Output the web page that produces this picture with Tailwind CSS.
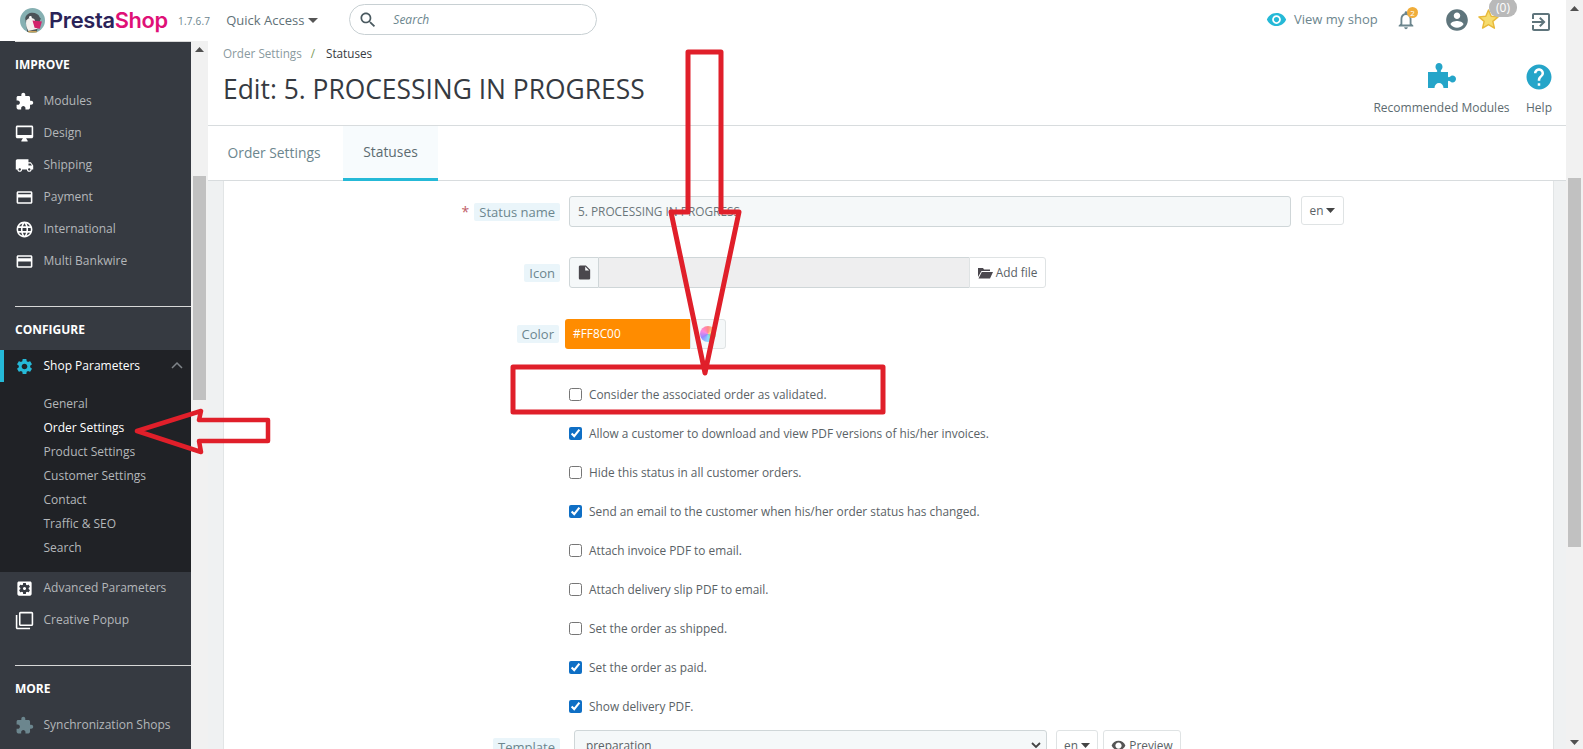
<!DOCTYPE html>
<html><head><meta charset="utf-8"><title>PrestaShop</title>
<script src="https://cdn.jsdelivr.net/npm/@tailwindcss/browser@4"></script></head>
<body class="m-0">
<div class="relative w-[1583px] h-[749px] overflow-hidden bg-white font-['Open_Sans',sans-serif] flex flex-col">
  <!-- top bar -->
  <header class="h-[41px] shrink-0 flex items-start bg-white relative">
    <div class="absolute left-[20px] top-[8px] w-[25px] h-[25px]">
      <svg viewBox="0 0 24 24" class="w-full h-full"><circle cx="12" cy="12" r="12" fill="#86b0b2"/><path d="M5 10C6 3 17 3 19 9L20 10L18 15L16 23H7Z" fill="#4b5257"/><path d="M6 12C8 9 12 9 14 11L17 20L8 22Q5 17 6 12Z" fill="#f4f1ee"/><path d="M12 12l9 1-2 7-5-1z" fill="#d2236a"/><circle cx="10" cy="9" r="1.300" fill="#fff"/><path d="M8 22h8v1.500H8z" fill="#c9a25a"/></svg>
    </div>
    <div class="ml-[49px] mt-[4px] w-[120px] text-[21.800px] leading-[32px] font-['Inter',sans-serif] font-semibold text-[#2a2358] tracking-[-0.3px] whitespace-nowrap">Presta<span class="text-[#df1077]">Shop</span></div>
    <div class="ml-[9px] mt-[13px] text-[10px] leading-[16px] text-[#6c868e] tracking-[0.2px]">1.7.6.7</div>
    <div class="ml-[16px] mt-[11px] flex items-center text-[13px] leading-[18px] text-[#5f7177]">Quick Access<svg class="ml-[4px] w-[10px] h-[5px]" viewBox="0 0 10 5"><path d="M0 0h10L5 5z" fill="#555"/></svg></div>
    <div class="ml-[31px] mt-[4px] w-[248px] h-[31px] rounded-full border border-[#c8d0d3] flex items-center">
      <svg class="ml-[8px] w-[20px] h-[20px]" viewBox="0 0 24 24"><path fill="#4a5a60" d="M15.5 14h-.79l-.28-.27C15.41 12.59 16 11.11 16 9.5 16 5.91 13.09 3 9.5 3S3 5.91 3 9.5 5.91 16 9.5 16c1.61 0 3.09-.59 4.23-1.57l.27.28v.79l5 4.99L20.49 19l-4.99-5zm-6 0C7.01 14 5 11.99 5 9.5S7.01 5 9.5 5 14 7.01 14 9.5 11.99 14 9.5 14z"/></svg>
      <span class="ml-[15px] text-[12px] italic text-[#6c868e]">Search</span>
    </div>
    <div class="absolute left-[1266px] top-[8px] flex items-center text-[13px] leading-[22px] text-[#6c868e]">
      <svg class="w-[21px] h-[21px] mr-[7px]" viewBox="0 0 24 24"><path fill="#25b9d7" d="M12 4.5C7 4.5 2.73 7.61 1 12c1.73 4.39 6 7.5 11 7.5s9.27-3.11 11-7.5c-1.73-4.39-6-7.5-11-7.5zM12 17c-2.76 0-5-2.24-5-5s2.24-5 5-5 5 2.24 5 5-2.24 5-5 5zm0-8c-1.66 0-3 1.34-3 3s1.34 3 3 3 3-1.34 3-3-1.34-3-3-3z"/></svg>View my shop
    </div>
    <div class="absolute left-[1395px] top-[9px] w-[22px] h-[22px]">
      <svg class="w-full h-full" viewBox="0 0 24 24"><path fill="#6c868e" d="M12 22c1.1 0 2-.9 2-2h-4c0 1.1.9 2 2 2zm6-6v-5c0-3.07-1.63-5.64-4.5-6.32V4c0-.83-.67-1.5-1.5-1.5s-1.5.67-1.5 1.5v.68C7.64 5.36 6 7.92 6 11v5l-2 2v1h16v-1l-2-2zm-2 1H8v-6c0-2.48 1.51-4.5 4-4.5s4 2.02 4 4.5v6z"/></svg>
      <span class="absolute left-[12px] top-[-2px] w-[11px] h-[11px] rounded-full bg-[#f0ad3a] text-white text-[8px] leading-[11px] text-center">2</span>
    </div>
    <svg class="absolute left-[1444px] top-[7px] w-[26px] h-[26px]" viewBox="0 0 24 24"><path fill="#5f757c" d="M12 2C6.48 2 2 6.48 2 12s4.48 10 10 10 10-4.48 10-10S17.52 2 12 2zm0 3c1.66 0 3 1.34 3 3s-1.34 3-3 3-3-1.34-3-3 1.34-3 3-3zm0 14.2c-2.5 0-4.71-1.28-6-3.22.03-1.99 4-3.08 6-3.08 1.99 0 5.97 1.09 6 3.08-1.29 1.94-3.5 3.22-6 3.22z"/></svg>
    <svg class="absolute left-[1477px] top-[8px] w-[23px] h-[23px]" viewBox="0 0 24 24"><path fill="#f6dc6e" stroke="#e8b93a" stroke-width="1.500" stroke-linejoin="round" d="M12 17.27L18.18 21l-1.64-7.03L22 9.24l-7.19-.61L12 2 9.19 8.63 2 9.24l5.46 4.73L5.82 21z"/></svg>
    <div class="absolute left-[1489px] top-[-2px] w-[28px] h-[19px] rounded-[9px] bg-[#b9b9b9] text-white text-[12px] leading-[19px] text-center">(0)</div>
    <svg class="absolute left-[1529px] top-[10px] w-[24px] h-[24px]" viewBox="0 0 24 24"><path fill="#5f757c" d="M10.09 15.59L11.5 17l5-5-5-5-1.41 1.41L12.67 11H3v2h9.67l-2.58 2.59zM19 3H5c-1.11 0-2 .9-2 2v4h2V5h14v14H5v-4H3v4c0 1.1.89 2 2 2h14c1.1 0 2-.9 2-2V5c0-1.1-.9-2-2-2z"/></svg>
  </header>

  <div class="flex flex-1 min-h-0">
    <!-- sidebar -->
    <aside class="w-[191px] shrink-0 bg-[#363a41] text-[12px] text-[#b4b7ba] relative">
      <div class="ml-[15px] h-px bg-[#d8d8d8]"></div>
      <div class="pl-[15px] pt-[14px] h-[43px] text-[12px] leading-[18px] font-bold text-white">IMPROVE</div>
      <nav>
        <a class="flex items-center h-[32px] pl-[15px]"><svg class="w-[19px] h-[19px] mr-[9.500px]" viewBox="0 0 24 24"><path fill="#fff" d="M20.5 11H19V7c0-1.1-.9-2-2-2h-4V3.5C13 2.12 11.88 1 10.5 1S8 2.12 8 3.5V5H4c-1.1 0-1.99.9-1.99 2v3.8H3.5c1.49 0 2.7 1.21 2.7 2.7s-1.21 2.7-2.7 2.7H2V20c0 1.1.9 2 2 2h3.8v-1.5c0-1.49 1.21-2.7 2.7-2.7 1.49 0 2.7 1.21 2.7 2.7V22H17c1.1 0 2-.9 2-2v-4h1.5c1.38 0 2.5-1.12 2.5-2.5S21.88 11 20.5 11z"/></svg>Modules</a>
        <a class="flex items-center h-[32px] pl-[15px]"><svg class="w-[19px] h-[19px] mr-[9.500px]" viewBox="0 0 24 24"><path fill="#fff" d="M21 2H3c-1.1 0-2 .9-2 2v12c0 1.1.9 2 2 2h7l-2 3v1h8v-1l-2-3h7c1.1 0 2-.9 2-2V4c0-1.1-.9-2-2-2zm0 12H3V4h18v10z"/></svg>Design</a>
        <a class="flex items-center h-[32px] pl-[15px]"><svg class="w-[19px] h-[19px] mr-[9.500px]" viewBox="0 0 24 24"><path fill="#fff" d="M20 8h-3V4H3c-1.1 0-2 .9-2 2v11h2c0 1.66 1.34 3 3 3s3-1.34 3-3h6c0 1.66 1.34 3 3 3s3-1.34 3-3h2v-5l-3-4zM6 18.5c-.83 0-1.5-.67-1.5-1.5s.67-1.5 1.5-1.5 1.5.67 1.5 1.5-.67 1.5-1.5 1.5zm13.5-9l1.96 2.5H17V9.5h2.5zm-1.5 9c-.83 0-1.5-.67-1.5-1.5s.67-1.5 1.5-1.5 1.5.67 1.5 1.5-.67 1.5-1.5 1.5z"/></svg>Shipping</a>
        <a class="flex items-center h-[32px] pl-[15px]"><svg class="w-[19px] h-[19px] mr-[9.500px]" viewBox="0 0 24 24"><path fill="#fff" d="M20 4H4c-1.11 0-1.99.89-1.99 2L2 18c0 1.11.89 2 2 2h16c1.11 0 2-.89 2-2V6c0-1.11-.89-2-2-2zm0 14H4v-6h16v6zm0-10H4V6h16v2z"/></svg>Payment</a>
        <a class="flex items-center h-[32px] pl-[15px]"><svg class="w-[19px] h-[19px] mr-[9.500px]" viewBox="0 0 24 24"><path fill="#fff" d="M11.99 2C6.47 2 2 6.48 2 12s4.47 10 9.99 10C17.52 22 22 17.52 22 12S17.52 2 11.99 2zm6.93 6h-2.95c-.32-1.25-.78-2.45-1.38-3.56 1.84.63 3.37 1.91 4.33 3.56zM12 4.04c.83 1.2 1.48 2.53 1.91 3.96h-3.82c.43-1.43 1.08-2.76 1.91-3.96zM4.26 14C4.1 13.36 4 12.69 4 12s.1-1.36.26-2h3.38c-.08.66-.14 1.32-.14 2 0 .68.06 1.34.14 2H4.26zm.82 2h2.95c.32 1.25.78 2.45 1.38 3.56-1.84-.63-3.37-1.9-4.33-3.56zm2.95-8H5.08c.96-1.66 2.49-2.93 4.33-3.56C8.81 5.55 8.35 6.75 8.03 8zM12 19.96c-.83-1.2-1.48-2.53-1.91-3.96h3.82c-.43 1.43-1.08 2.76-1.91 3.96zM14.34 14H9.66c-.09-.66-.16-1.32-.16-2 0-.68.07-1.35.16-2h4.68c.09.65.16 1.32.16 2 0 .68-.07 1.34-.16 2zm.25 5.56c.6-1.11 1.06-2.31 1.38-3.56h2.95c-.96 1.65-2.49 2.93-4.33 3.56zM16.36 14c.08-.66.14-1.32.14-2 0-.68-.06-1.34-.14-2h3.38c.16.64.26 1.31.26 2s-.1 1.36-.26 2h-3.38z"/></svg>International</a>
        <a class="flex items-center h-[32px] pl-[15px]"><svg class="w-[19px] h-[19px] mr-[9.500px]" viewBox="0 0 24 24"><path fill="#fff" d="M20 4H4c-1.11 0-1.99.89-1.99 2L2 18c0 1.11.89 2 2 2h16c1.11 0 2-.89 2-2V6c0-1.11-.89-2-2-2zm0 14H4v-6h16v6zm0-10H4V6h16v2z"/></svg>Multi Bankwire</a>
      </nav>
      <div class="ml-[15px] mt-[29px] h-px bg-[#d8d8d8]"></div>
      <div class="pl-[15px] pt-[14px] h-[43px] text-[12px] leading-[18px] font-bold text-white">CONFIGURE</div>
      <div class="bg-[#202226] h-[222px]">
        <a class="flex items-center h-[32px] pl-[11px] border-l-[4px] border-[#25b9d7] text-white relative"><svg class="w-[19px] h-[19px] mr-[9.500px]" viewBox="0 0 24 24"><path fill="#25b9d7" d="M19.14 12.94c.04-.3.06-.61.06-.94 0-.32-.02-.64-.07-.94l2.03-1.58c.18-.14.23-.41.12-.61l-1.92-3.32c-.12-.22-.37-.29-.59-.22l-2.39.96c-.5-.38-1.03-.7-1.62-.94l-.36-2.54c-.04-.24-.24-.41-.48-.41h-3.84c-.24 0-.43.17-.47.41l-.36 2.54c-.59.24-1.13.57-1.62.94l-2.39-.96c-.22-.08-.47 0-.59.22L2.74 8.87c-.12.21-.08.47.12.61l2.03 1.58c-.05.3-.09.63-.09.94s.02.64.07.94l-2.03 1.58c-.18.14-.23.41-.12.61l1.92 3.32c.12.22.37.29.59.22l2.39-.96c.5.38 1.03.7 1.62.94l.36 2.54c.05.24.24.41.48.41h3.84c.24 0 .44-.17.47-.41l.36-2.54c.59-.24 1.13-.56 1.62-.94l2.39.96c.22.08.47 0 .59-.22l1.92-3.32c.12-.22.07-.47-.12-.61l-2.01-1.58zM12 15.6c-1.98 0-3.6-1.62-3.6-3.6s1.62-3.6 3.6-3.6 3.6 1.62 3.6 3.6-1.62 3.6-3.6 3.6z"/></svg>Shop Parameters<svg class="absolute left-[167px] top-[11px] w-[12px] h-[8px]" viewBox="0 0 12 8"><path d="M1 7l5-5 5 5" fill="none" stroke="#7f8489" stroke-width="1.5"/></svg></a>
        <ul class="pl-[43.500px] pt-[10px] leading-[24px]">
          <li>General</li><li class="text-white">Order Settings</li><li>Product Settings</li><li>Customer Settings</li><li>Contact</li><li>Traffic &amp; SEO</li><li>Search</li>
        </ul>
      </div>
      <a class="flex items-center h-[32px] pl-[15px]"><svg class="w-[19px] h-[19px] mr-[9.500px]" viewBox="0 0 24 24"><path fill="#fff" d="M12 10c-1.1 0-2 .9-2 2s.9 2 2 2 2-.9 2-2-.9-2-2-2zm7-7H5c-1.11 0-2 .9-2 2v14c0 1.1.89 2 2 2h14c1.11 0 2-.9 2-2V5c0-1.1-.89-2-2-2zm-1.75 9c0 .23-.02.46-.05.68l1.48 1.16c.13.11.17.3.08.45l-1.4 2.42c-.09.15-.27.21-.43.15l-1.74-.7c-.36.28-.76.51-1.18.69l-.26 1.85c-.03.17-.18.3-.35.3h-2.8c-.17 0-.32-.13-.35-.29l-.26-1.85c-.43-.18-.82-.41-1.18-.69l-1.74.7c-.16.06-.34 0-.43-.15l-1.4-2.42c-.09-.15-.05-.34.08-.45l1.48-1.16c-.03-.23-.05-.46-.05-.69 0-.23.02-.46.05-.68l-1.48-1.16c-.13-.11-.17-.3-.08-.45l1.4-2.42c.09-.15.27-.21.43-.15l1.74.7c.36-.28.76-.51 1.18-.69l.26-1.85c.03-.17.18-.3.35-.3h2.8c.17 0 .32.13.35.29l.26 1.85c.43.18.82.41 1.18.69l1.74-.7c.16-.06.34 0 .43.15l1.4 2.42c.09.15.05.34-.08.45l-1.48 1.16c.03.23.05.46.05.69z"/></svg>Advanced Parameters</a>
      <a class="flex items-center h-[32px] pl-[15px]"><svg class="w-[19px] h-[19px] mr-[9.500px]" viewBox="0 0 24 24"><path fill="#fff" d="M3 5H1v16c0 1.1.9 2 2 2h16v-2H3V5zm18-4H7c-1.1 0-2 .9-2 2v14c0 1.1.9 2 2 2h14c1.1 0 2-.9 2-2V3c0-1.1-.9-2-2-2zm0 16H7V3h14v14z"/></svg>Creative Popup</a>
      <div class="ml-[15px] mt-[29px] h-px bg-[#d8d8d8]"></div>
      <div class="pl-[15px] pt-[14px] h-[43px] text-[12px] leading-[18px] font-bold text-white">MORE</div>
      <a class="flex items-center h-[32px] pl-[15px]"><svg class="w-[19px] h-[19px] mr-[9.500px]" viewBox="0 0 24 24"><path fill="#6c868e" d="M20.5 11H19V7c0-1.1-.9-2-2-2h-4V3.5C13 2.12 11.88 1 10.5 1S8 2.12 8 3.5V5H4c-1.1 0-1.99.9-1.99 2v3.8H3.5c1.49 0 2.7 1.21 2.7 2.7s-1.21 2.7-2.7 2.7H2V20c0 1.1.9 2 2 2h3.8v-1.5c0-1.49 1.21-2.7 2.7-2.7 1.49 0 2.7 1.21 2.7 2.7V22H17c1.1 0 2-.9 2-2v-4h1.5c1.38 0 2.5-1.12 2.5-2.5S21.88 11 20.5 11z"/></svg>Synchronization Shops</a>
    </aside>
    <!-- sidebar scrollbar -->
    <div class="w-[17px] shrink-0 bg-[#f1f1f1] flex flex-col items-center">
      <svg class="mt-[6px] w-[9px] h-[5px]" viewBox="0 0 9 5"><path d="M0 5h9L4.500 0z" fill="#505050"/></svg>
      <div class="mt-[124px] w-[13px] h-[224px] bg-[#c1c1c1]"></div>
    </div>
    <!-- main -->
    <main class="flex-1 min-w-0 flex flex-col bg-white">
      <div class="h-[85px] border-b border-[#d8dcde] relative pl-[15px]">
        <div class="pt-[3px] text-[11.700px] leading-[18px] text-[#8a9aa0] flex items-center">Order Settings<span class="mx-[9px] text-[#7c9b5a]">/</span><span class="ml-[2px] text-[#363a41]">Statuses</span></div>
        <h1 class="mt-[11px] text-[26.400px] leading-[33px] text-[#363a41] whitespace-nowrap">Edit: 5. PROCESSING IN PROGRESS</h1>
        <div class="absolute left-[1166px] top-[21px] w-[135px] flex flex-col items-center text-[12px] leading-[18px] text-[#5c6b70] whitespace-nowrap">
          <svg class="w-[28px] h-[25px] mt-[1px] mb-[11px]" viewBox="0 0 28 25"><path fill="#25a5c9" d="M0 9H8.500C9.500 9 9.500 7.800 8.800 7 8 6.200 7.500 5 7.500 3.800 7.500 1.700 9.100 0 11 0s3.500 1.700 3.500 3.800C14.500 5 14 6.200 13.200 7 12.500 7.800 12.500 9 13.500 9H20V13.500C20 14.500 21.200 14.500 22 13.800 22.800 13 23.600 12.600 24.500 12.600 26.400 12.600 28 14.100 28 16S26.400 19.400 24.500 19.400C23.600 19.400 22.800 19 22 18.200 21.200 17.500 20 17.500 20 18.500V25H15.500C15.500 22 13.500 20 11 20S6.500 22 6.500 25H0Z"/></svg>Recommended Modules</div>
        <div class="absolute left-[1318px] top-[21px] w-[26px] flex flex-col items-center text-[12px] leading-[18px] text-[#5c6b70]">
          <svg class="w-[30px] h-[30px] mb-[7px] shrink-0" viewBox="0 0 24 24"><path fill="#25a5c9" d="M12 2C6.480 2 2 6.480 2 12s4.480 10 10 10 10-4.480 10-10S17.520 2 12 2zm1 17h-2v-2h2v2zm2.070-7.750l-.9.920C13.450 12.900 13 13.500 13 15h-2v-.5c0-1.100.450-2.100 1.170-2.830l1.240-1.260c.370-.360.590-.860.590-1.410 0-1.100-.9-2-2-2s-2 .9-2 2H8c0-2.210 1.790-4 4-4s4 1.790 4 4c0 .880-.360 1.680-.930 2.250z"/></svg>Help</div>
      </div>
      <div class="h-[55px] border-b border-[#d8dcde] flex text-[13.800px]">
        <div class="w-[135px] pr-[3px] flex items-center justify-center text-[#6c868e]">Order Settings</div>
        <div class="w-[95px] flex items-center justify-center text-[#5c6b70] bg-[#f7fbfd] border-b-[3px] border-[#25b9d7] h-[55px]">Statuses</div>
      </div>
      <div class="flex-1 min-h-0 bg-[#eff1f2] pl-[15px] pr-[12px]">
        <div class="h-full bg-white border-x border-[#e2e5e6] pt-[15px] text-[11.850px] text-[#5a6266]">
          <div class="flex items-start h-[31px]">
            <div class="w-[336px] flex justify-end items-center h-[31px]"><span class="text-[#c05c67] mr-[5px] text-[14px]">*</span><span class="px-[5px] bg-[#eaf5fa] rounded-[2px] text-[13px] leading-[18px] text-[#6c868e]">Status name</span></div>
            <div class="ml-[9px] w-[722px] h-[31px] flex items-center bg-[#f5f8f9] border border-[#cfd6d8] rounded-[3px] pl-[8px] text-[#6b767a]">5. PROCESSING IN PROGRESS</div>
            <div class="ml-[10px] w-[43px] h-[29px] border border-[#dfe3e4] rounded-[3px] flex items-center justify-center text-[#5a6266]">en<svg class="ml-[3px] w-[9px] h-[5px]" viewBox="0 0 9 5"><path d="M0 0h9L4.500 5z" fill="#444"/></svg></div>
          </div>
          <div class="flex items-start h-[31px] mt-[30px]">
            <div class="w-[336px] flex justify-end items-center h-[31px]"><span class="px-[5px] bg-[#eaf5fa] rounded-[2px] text-[13px] leading-[18px] text-[#6c868e]">Icon</span></div>
            <div class="ml-[9px] w-[30px] h-[31px] flex items-center justify-center bg-[#f5f8f9] border border-[#cfd6d8] rounded-l-[3px]"><svg class="w-[17px] h-[17px]" viewBox="0 0 24 24"><path fill="#4a474d" d="M6 2c-1.100 0-1.990.9-1.990 2L4 20c0 1.100.890 2 1.990 2H18c1.100 0 2-.9 2-2V8l-6-6H6zm7 7V3.500L18.500 9H13z"/></svg></div>
            <div class="w-[370px] h-[31px] bg-[#eeeeef] border-y border-[#cfd6d8]"></div>
            <div class="w-[77px] h-[31px] border border-[#dfe3e4] rounded-r-[3px] flex items-center justify-center text-[#5a6266]"><svg class="w-[15px] h-[12px] mr-[3px]" viewBox="0 0 15 12"><path d="M0 1h5l1 1.500h6V4H3.500L0 10zM3.800 5H15l-3 6.500H0.500z" fill="#4a474d"/></svg>Add file</div>
          </div>
          <div class="flex items-start h-[30px] mt-[31px]">
            <div class="w-[335px] flex justify-end items-center h-[30px]"><span class="px-[5px] bg-[#eaf5fa] rounded-[2px] text-[13px] leading-[18px] text-[#6c868e]">Color</span></div>
            <div class="ml-[6px] w-[125px] h-[30px] bg-[#ff8c00] rounded-l-[3px] flex items-center pl-[8px] text-white">#FF8C00</div>
            <div class="w-[36px] h-[30px] border border-[#dfe3e4] rounded-r-[3px] bg-[#f5f8f9] flex items-center justify-center"><span class="w-[16px] h-[16px] rounded-full bg-[conic-gradient(#f88,#fd8,#8d9,#8df,#98f,#f8d,#f88)]"></span></div>
          </div>
          <div class="mt-[26px] pl-[345px]">
            <label class="flex items-center h-[39px]"><input type="checkbox" class="m-0 mr-[7px] accent-[#0f6fc5]">Consider the associated order as validated.</label>
            <label class="flex items-center h-[39px]"><input type="checkbox" checked class="m-0 mr-[7px] accent-[#0f6fc5]">Allow a customer to download and view PDF versions of his/her invoices.</label>
            <label class="flex items-center h-[39px]"><input type="checkbox" class="m-0 mr-[7px] accent-[#0f6fc5]">Hide this status in all customer orders.</label>
            <label class="flex items-center h-[39px]"><input type="checkbox" checked class="m-0 mr-[7px] accent-[#0f6fc5]">Send an email to the customer when his/her order status has changed.</label>
            <label class="flex items-center h-[39px]"><input type="checkbox" class="m-0 mr-[7px] accent-[#0f6fc5]">Attach invoice PDF to email.</label>
            <label class="flex items-center h-[39px]"><input type="checkbox" class="m-0 mr-[7px] accent-[#0f6fc5]">Attach delivery slip PDF to email.</label>
            <label class="flex items-center h-[39px]"><input type="checkbox" class="m-0 mr-[7px] accent-[#0f6fc5]">Set the order as shipped.</label>
            <label class="flex items-center h-[39px]"><input type="checkbox" checked class="m-0 mr-[7px] accent-[#0f6fc5]">Set the order as paid.</label>
            <label class="flex items-center h-[39px]"><input type="checkbox" checked class="m-0 mr-[7px] accent-[#0f6fc5]">Show delivery PDF.</label>
          </div>
          <div class="flex items-start mt-[4px]">
            <div class="w-[336px] flex justify-end items-center h-[31px] pt-[3px]"><span class="px-[5px] bg-[#eaf5fa] rounded-[2px] text-[13px] leading-[18px] text-[#6c868e]">Template</span></div>
            <div class="ml-[14px] w-[473px] h-[31px] flex items-center justify-between bg-[#f5f8f9] border border-[#cfd6d8] rounded-[3px] pl-[11px] pr-[5px] text-[#5a6266]">preparation<svg class="w-[10px] h-[7px]" viewBox="0 0 10 7"><path d="M1 1l4 4 4-4" fill="none" stroke="#444" stroke-width="1.800"/></svg></div>
            <div class="ml-[9px] w-[42px] h-[31px] border border-[#dfe3e4] rounded-[3px] flex items-center justify-center">en<svg class="ml-[3px] w-[9px] h-[5px]" viewBox="0 0 9 5"><path d="M0 0h9L4.500 5z" fill="#444"/></svg></div>
            <div class="ml-[5px] w-[78px] h-[31px] border border-[#dfe3e4] rounded-[3px] flex items-center justify-center"><svg class="w-[15px] h-[15px] mr-[3px]" viewBox="0 0 24 24"><path fill="#555" d="M12 4.500C7 4.500 2.730 7.610 1 12c1.730 4.390 6 7.500 11 7.500s9.270-3.110 11-7.500c-1.730-4.390-6-7.500-11-7.500zM12 17c-2.760 0-5-2.240-5-5s2.240-5 5-5 5 2.240 5 5-2.240 5-5 5z"/></svg>Preview</div>
          </div>
        </div>
      </div>
    </main>
    <!-- page scrollbar -->
    <div class="w-[17px] shrink-0 bg-[#f1f1f1] flex flex-col items-center relative -mt-[41px]">
      <svg class="mt-[6px] w-[9px] h-[5px]" viewBox="0 0 9 5"><path d="M0 5h9L4.500 0z" fill="#505050"/></svg>
      <div class="mt-[167px] w-[13px] h-[369px] bg-[#c1c1c1]"></div>
      <svg class="mt-auto mb-[4px] w-[9px] h-[5px]" viewBox="0 0 9 5"><path d="M0 0h9L4.500 5z" fill="#505050"/></svg>
    </div>
  </div>

  <!-- hand-drawn annotation arrows -->
  <svg class="absolute inset-0 pointer-events-none" width="1583" height="749" viewBox="0 0 1583 749">
    <g fill="none" stroke="#e01f2a" stroke-width="5" stroke-linejoin="round">
      <path d="M688 212V52H721V212H739L705 373L671 212Z"/>
      <rect x="513" y="367" width="370" height="45"/>
      <path stroke-width="4.500" d="M137 431L201 411L199 420H268V441H199L201 452Z"/>
    </g>
  </svg>
</div>
</body></html>
